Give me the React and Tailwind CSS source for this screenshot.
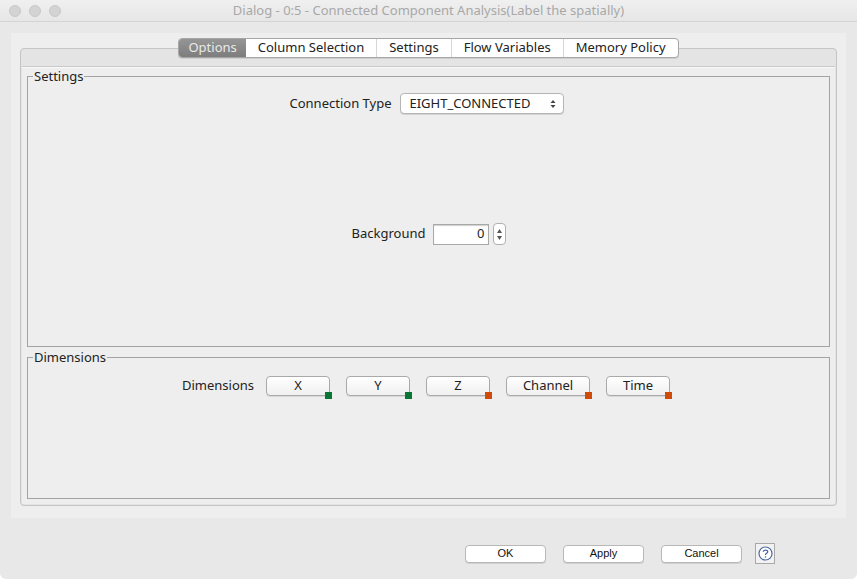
import React from "react";

const font = { fontFamily: '"Noto Sans", "Open Sans", sans-serif' };

function DimButton({ label, width, on }) {
  return (
    <div className="relative">
      <div
        className={`h-[20px] ${width} rounded-[4px] border border-[#a9a9a9] bg-gradient-to-b from-white to-[#f0f0f0] shadow-[0_1px_0_#d8d8d8] flex items-center justify-center text-[13px] text-[#222]`}
      >
        {label}
      </div>
      <div
        className={`absolute right-[-2px] bottom-[-3px] w-[7px] h-[7px] ${on ? "bg-[#0b7633]" : "bg-[#d04a0a]"}`}
      />
    </div>
  );
}

function BottomButton({ label }) {
  return (
    <div className="w-[81px] h-[18px] rounded-[4px] border border-[#b8b8b8] bg-white shadow-[0_1px_0_#d0d0d0] flex items-center justify-center text-[11px] text-[#111]" style={{ fontFamily: '"Liberation Sans", Arial, sans-serif' }}>
      {label}
    </div>
  );
}

export default function App() {
  const tabs = ["Column Selection", "Settings", "Flow Variables", "Memory Policy"];
  return (
    <div className="w-[857px] h-[579px] bg-[#e8e8e8] rounded-b-[6px] overflow-hidden flex flex-col" style={font}>
      {/* title bar */}
      <div className="relative h-[22px] bg-gradient-to-b from-[#f0f0f0] to-[#e6e6e6] border-b border-[#d4d4d4] flex items-center justify-center">
        <div className="absolute left-[9px] top-[5px] flex gap-[8px]">
          <div className="w-[12px] h-[12px] rounded-full bg-[#d3d3d3] border border-[#c8c8c8]" />
          <div className="w-[12px] h-[12px] rounded-full bg-[#d3d3d3] border border-[#c8c8c8]" />
          <div className="w-[12px] h-[12px] rounded-full bg-[#d3d3d3] border border-[#c8c8c8]" />
        </div>
        <span className="text-[13px] text-[#a8a8a8]">
          Dialog - 0:5 - Connected Component Analysis(Label the spatially)
        </span>
      </div>

      {/* content panel */}
      <div className="px-[11px] pt-[11px]">
        <div className="h-[485px] bg-[#eeeeee] px-[9px] pt-[5px] pb-[12px] flex flex-col">
          {/* tabs */}
          <div className="relative z-10 flex justify-center">
            <div className="flex h-[20px] rounded-[4px] border border-[#a6a6a6] bg-white shadow-[0_1px_0_#cfcfcf] overflow-hidden text-[13px]">
              <div className="px-[9px] flex items-center bg-gradient-to-b from-[#959595] to-[#7d7d7d] text-[#e9e9e9]">
                Options
              </div>
              {tabs.map((t, i) => (
                <div
                  key={t}
                  className={`px-[12px] flex items-center text-[#222] ${i > 0 ? "border-l border-[#d6d6d6]" : ""}`}
                >
                  {t}
                </div>
              ))}
            </div>
          </div>
          {/* tab pane */}
          <div className="-mt-[10px] flex-1 rounded-[4px] border border-[#c4c4c4] bg-[#e4e4e4] pt-[17px] px-[1px] pb-[1px] flex">
            <div className="flex-1 border-t border-[#c8c8c8] bg-[#eeeeee] px-[5px] pb-[5px] flex flex-col gap-[2px] shadow-[inset_0_1px_0_#fafafa]">
              <fieldset className="h-[279px] border border-[#a3a3a3] px-[0px] mt-[1px] flex flex-col">
                <legend className="ml-[5px] px-[1px] text-[13px] text-[#222] leading-[16px]">Settings</legend>
                <div className="mt-[9px] flex items-center justify-center gap-[9px] pr-[3px]">
                  <span className="text-[13px] text-[#222]">Connection Type</span>
                  <div className="w-[164px] h-[21px] rounded-[4px] border border-[#b5b5b5] bg-white shadow-[0_1px_0_#d4d4d4] flex items-center pl-[8px] pr-[7px] text-[13px] text-[#222]">
                    <span className="flex-1">EIGHT_CONNECTED</span>
                    <svg width="6" height="10" viewBox="0 0 6 10">
                      <path d="M0.5 4 L3 1 L5.5 4 Z" fill="#444" />
                      <path d="M0.5 6 L3 9 L5.5 6 Z" fill="#444" />
                    </svg>
                  </div>
                </div>
                <div className="mt-[109px] flex items-center justify-center gap-[8px] pl-[1px]">
                  <span className="text-[13px] text-[#222]">Background</span>
                  <div className="flex items-center gap-[4px]">
                    <div className="w-[56px] h-[21px] border border-[#a8a8a8] bg-white shadow-[inset_0_1px_1px_#d0d0d0] flex items-center justify-end pr-[4px] text-[13px] text-[#222]">
                      0
                    </div>
                    <div className="w-[13px] h-[22px] rounded-[4px] border border-[#b0b0b0] bg-white flex flex-col items-center justify-center gap-[3px]">
                      <svg width="5" height="4" viewBox="0 0 5 4"><path d="M0 4 L2.5 0 L5 4 Z" fill="#555" /></svg>
                      <svg width="5" height="4" viewBox="0 0 5 4"><path d="M0 0 L2.5 4 L5 0 Z" fill="#555" /></svg>
                    </div>
                  </div>
                </div>
              </fieldset>
              <fieldset className="flex-1 border border-[#a3a3a3]">
                <legend className="ml-[5px] px-[1px] text-[13px] text-[#222] leading-[16px]">Dimensions</legend>
                <div className="mt-[11px] flex items-center justify-center gap-[16px] pr-[5px]">
                  <span className="text-[13px] text-[#222] mr-[-4px]">Dimensions</span>
                  <DimButton label="X" width="w-[64px]" on />
                  <DimButton label="Y" width="w-[64px]" on />
                  <DimButton label="Z" width="w-[64px]" />
                  <DimButton label="Channel" width="w-[84px]" />
                  <DimButton label="Time" width="w-[64px]" />
                </div>
              </fieldset>
            </div>
          </div>
        </div>
      </div>

      {/* bottom buttons */}
      <div className="mt-[25px] flex items-center justify-end pr-[82px] gap-[17px]">
        <BottomButton label="OK" />
        <BottomButton label="Apply" />
        <BottomButton label="Cancel" />
        <div className="ml-[-4px] w-[20px] h-[21px] border border-[#a8a8a8] bg-[#f2f2f2] flex items-center justify-center">
          <svg width="15" height="15" viewBox="0 0 15 15">
            <circle cx="7.5" cy="7.5" r="6.5" fill="white" stroke="#4a6aa0" strokeWidth="1.2" />
            <path d="M5.3 5.8 C5.3 3.6 9.7 3.6 9.7 5.8 C9.7 7.2 7.5 7.3 7.5 8.9" fill="none" stroke="#4a6aa0" strokeWidth="1.3" />
            <circle cx="7.5" cy="11" r="0.8" fill="#4a6aa0" />
          </svg>
        </div>
      </div>
    </div>
  );
}
